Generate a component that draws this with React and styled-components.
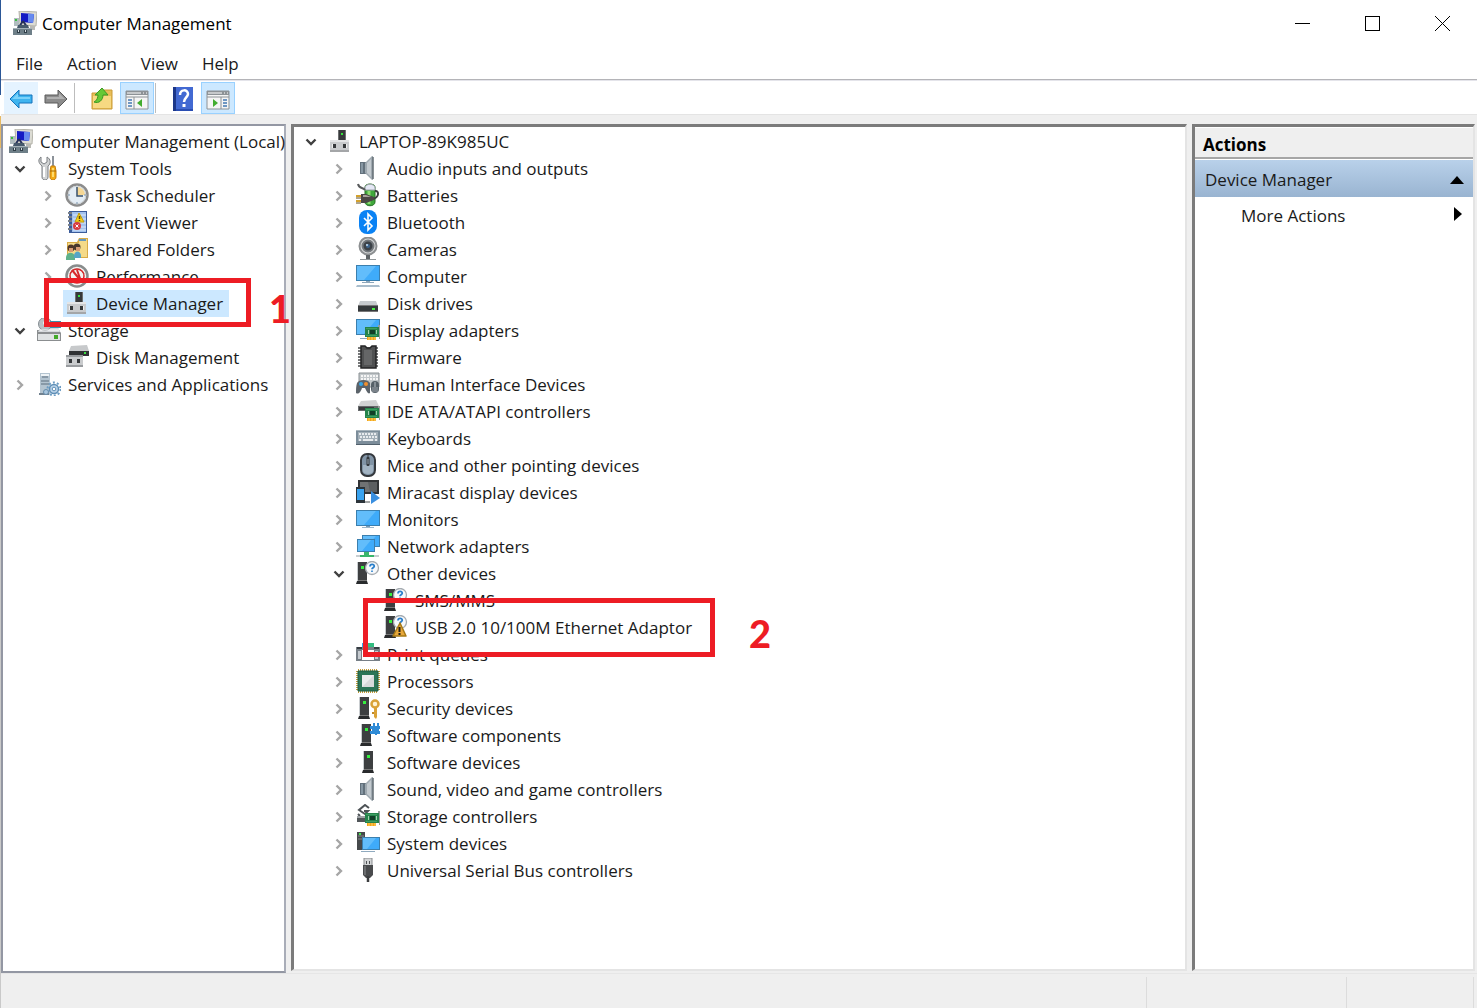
import React, { useState } from "react";
import styled, { createGlobalStyle } from "styled-components";

const GlobalStyle = createGlobalStyle`
  * {
    box-sizing: border-box;
  }
  body {
    margin: 0;
    background: #fff;
    color: #1a1a1a;
    font-family: "Open Sans", "Noto Sans", sans-serif;
    font-size: 17px;
    line-height: 27px;
  }
  button {
    font: inherit;
    color: inherit;
    background: none;
    border: 0;
    padding: 0;
  }
`;

const Window = styled.div`
  min-height: 100vh;
  display: flex;
  flex-direction: column;
  padding-left: 1px;
  background: linear-gradient(
      #2b5797 95px,
      #fff 95px 116px,
      #e6b965 116px 148px,
      #c9c9c9 148px
    )
    left / 1px 100% no-repeat #efefef;
`;

const TitleBar = styled.header`
  display: flex;
  align-items: center;
  height: 46px;
  padding-left: 12px;
  gap: 5px;
  background: #fff;
  color: #000;
`;

const Title = styled.h1`
  flex: 1;
  margin: 0;
  font-size: 17px;
  font-weight: 400;
`;

const WindowControls = styled.div`
  display: flex;
`;

const WindowButton = styled.button`
  display: flex;
  align-items: center;
  justify-content: center;
  width: 70px;
  height: 44px;
`;

const MenuBar = styled.nav`
  display: flex;
  align-items: center;
  height: 34px;
  padding: 2px 0 0 3px;
  background: #fff;
  border-bottom: 1px solid #b4b4b8;
`;

const MenuButton = styled.button`
  padding: 0 12px;
  height: 30px;
`;

const Toolbar = styled.div`
  display: flex;
  align-items: center;
  height: 35px;
  gap: 1px;
  padding: 1px 3px 0;
  background: #fff;
  border-top: 1px solid #e4e4ea;
  border-bottom: 1px solid #e4e4e4;
`;

const ToolButton = styled.button`
  display: flex;
  align-items: center;
  justify-content: center;
  width: 34px;
  height: 32px;
  padding-top: 2px;
  background: ${(props) => (props.$on ? "#cce8ff" : props.$hover ? "#e5f3ff" : "none")};
  border: 1px solid ${(props) => (props.$on ? "#99d1ff" : "transparent")};
`;

const Separator = styled.span`
  width: 10px;
  height: 30px;
  border-left: 1px solid #bdbdbd;
`;

const Body = styled.main`
  flex: 1;
  display: grid;
  grid-template-columns: 285px minmax(0, 1fr) 283px;
  gap: 5px;
  padding: 9px 2px 0 0;
`;

const ScopePane = styled.section`
  padding: 2px 0;
  background: #fff;
  border: 2px solid #9397a3;
  border-right-color: #a9adb8;
`;

const SunkenPane = styled.section`
  margin-bottom: 2px;
  background: #fff;
  border: 3px solid;
  border-width: 3px 2px 2px 3px;
  border-color: #7b7b7b #e4e4e4 #e4e4e4 #7b7b7b;
`;

const Tree = styled.ul`
  margin: 0;
  padding: ${(props) => props.$top || 0}px 0 0;
  list-style: none;
`;

const Row = styled.li`
  position: relative;
  display: flex;
  height: 27px;
  padding-left: ${(props) => props.$indent}px;
`;

const Toggle = styled.button`
  display: flex;
  align-items: center;
  justify-content: center;
  width: 20px;
  margin-right: 5px;
`;

const ToggleSpace = styled.span`
  width: 20px;
  margin-right: 5px;
`;

const Item = styled.button`
  display: flex;
  align-items: center;
  gap: 7px;
  padding: 0 6px 0 2px;
  white-space: nowrap;
  background: ${(props) => (props.$selected ? "#cce8ff" : "none")};

  svg {
    margin-bottom: 2px;
  }
`;

const Callout = styled.span`
  position: absolute;
  z-index: 2;
  top: ${(props) => props.$top}px;
  left: ${(props) => props.$left}px;
  width: ${(props) => props.$width}px;
  height: ${(props) => props.$height}px;
  border: 5px solid #ed1c24;
  pointer-events: none;
`;

const CalloutNumber = styled.b`
  position: absolute;
  top: 50%;
  left: 100%;
  padding-left: ${(props) => props.$gap}px;
  transform: translateY(-50%);
  margin-top: 5px;
  color: #ed1c24;
  font: 900 38px/48px Lato, sans-serif;
`;

const ActionsTitle = styled.h2`
  margin: 0;
  padding: 3px 8px 0;
  height: 32px;
  font-size: 17px;
  font-weight: 700;
  color: #000;
  background: #efefef;
  border-top: 1px solid #fff;
  border-bottom: 2px solid #a6a6a6;
`;

const ActionsGroup = styled.button`
  display: flex;
  align-items: center;
  justify-content: space-between;
  width: 100%;
  height: 37px;
  margin-top: 1px;
  padding: 2px 9px 0 10px;
  background: linear-gradient(#b9d1ea, #99b4d1);
`;

const ActionItem = styled.button`
  display: flex;
  align-items: center;
  justify-content: space-between;
  width: 100%;
  height: 37px;
  padding: 0 11px 0 46px;

  svg {
    margin-bottom: 4px;
  }
`;

const StatusBar = styled.footer`
  display: flex;
  justify-content: flex-end;
  height: 35px;
  padding: 3px 3px 0 0;
  border-top: 1px solid #e6e6e6;
`;

const StatusCell = styled.div`
  width: ${(props) => props.$width}px;
  border-left: 1px solid #dcdcdc;
  &:last-child {
    border-right: 1px solid #dcdcdc;
  }
`;

const Svg = ({ size = 24, children }) => (
  <svg width={size} height={size} viewBox="0 0 24 24" fill="none" aria-hidden="true">
    {children}
  </svg>
);

const Chevron = ({ open }) => (
  <svg width="12" height="12" viewBox="0 0 12 12" fill="none" aria-hidden="true">
    {open ? (
      <path d="M1.500 3.500 6 8l4.500-4.500" stroke="#404040" strokeWidth="2.400" />
    ) : (
      <path d="m3.500 1.500 4.500 4.500-4.500 4.500" stroke="#a6a6a6" strokeWidth="2.400" />
    )}
  </svg>
);

// Shared parts

const Tower = ({ x = 0 }) => (
  <g transform={`translate(${x} 0)`}>
    <path d="M1 1h10v20H1z" fill="#c9cdd0" />
    <path d="M2 1h9v19H2z" fill="#3d3f41" />
    <path d="M1 20h10l1 3H0z" fill="#292b2d" />
    <path d="M2 19h9v1H2z" fill="#777" />
    <path d="M5 5h3v3H5z" fill="#35f03f" />
  </g>
);

const Question = () => (
  <g>
    <circle cx="16" cy="7" r="6.500" fill="#f7f9fb" stroke="#a4aab0" strokeWidth="1.300" />
    <path d="M14 5.500c0-3 4.500-2.800 4.200-.2-.2 1.500-2.200 1.400-2.200 3" stroke="#2a7fcb" strokeWidth="1.800" />
    <path d="M15.200 9.500h1.600v1.600h-1.600z" fill="#2a7fcb" />
  </g>
);

const Card = () => (
  <g>
    <path d="M9 9h14v10H9z" fill="#24834b" />
    <path d="M22 7h2v14h-1V9h-1z" fill="#9a9e9b" />
    <path d="M10 10h11v1H10zM10 17h11v1H10z" fill="#3f9d62" />
    <path d="M14 12h5v4h-5z" fill="#123e28" />
    <path d="M12 12h1v4h-1zM20 12h1v4h-1z" fill="#9fd0ad" />
    <path d="M11 19h9v3h-9z" fill="#f3a519" />
    <path d="M13 19v3m3-3v3m3-3v3" stroke="#ffd36a" />
  </g>
);

const Screen = ({ x = 0, y = 0, w = 24, h = 16 }) => (
  <g>
    <path d={`M${x} ${y}h${w}v${h}h-${w}z`} fill="#3b7fae" />
    <path d={`M${x + 1} ${y + 1}h${w - 2}v${h - 2}h-${w - 2}z`} fill="#3fabfa" />
    <path d={`M${x + 1} ${y + 1}h${w - 5}l-${Math.round(w / 2)} ${h - 2}h-${w - 5 - Math.round(w / 2)}z`} fill="#62bdfb" />
  </g>
);

const UsbBox = () => (
  <g>
    <path d="M10 1h8v11h-8z" fill="#37393b" />
    <path d="M10 1h1v11h-1zM17 1h1v11h-1z" fill="#6d6f70" />
    <path d="M13 4h2v2h-2z" fill="#35e53b" />
    <path d="M2 11h19v12H2z" fill="#c9cbcd" />
    <path d="M2 11h19v2H2z" fill="#e4e5e6" />
    <path d="M2 21h19v2H2z" fill="#a4a6a8" />
    <path d="M5 15h3v4H5zM15 15h3v4h-3z" fill="#35383a" />
    <path d="M4 15h1v4H4zM18 15h1v4h-1z" fill="#eee" />
  </g>
);

const icons = {
  management: (
    <>
      <path d="m6 0 18 1-1 14-16-1z" fill="#dcdcd4" stroke="#b3b2a8" />
      <path d="m8 2 13 1-1 9-12-1z" fill="#141bc4" />
      <path d="m15 3 6 0-1 9-5-1z" fill="#668aef" />
      <path d="M1 7h5v8H1z" fill="#b1bdc0" />
      <path d="M2 8h2v2H2z" fill="#3bbe3f" />
      <path d="M10 10 6 16M10 10l4 6" stroke="#25305a" strokeWidth="2" />
      <path d="M17 15h5v4h-5z" fill="#b9b9b4" />
      <path d="M5 14h10l1 3H4z" fill="#46596b" />
      <path d="M0 17h19v7H0z" fill="#6e7f88" />
      <path d="M0 17h19v1H0z" fill="#a4b1b8" />
      <path d="M4 19h3v3H4zM11 19h3v3h-3z" fill="#303f49" />
      <path d="M5 19h1v2H5zM12 19h1v2h-1z" fill="#d4dce0" />
    </>
  ),
  tools: (
    <>
      <path d="M4 1v5l3 2 3-2V1c4 2 4 7 1 9v11c0 4-6 4-6 0V10C1 7 1 3 4 1Z" fill="#d2d4d5" stroke="#7b7f83" />
      <path d="M7 11v10" stroke="#fff" strokeWidth="2" />
      <path d="M16 0v11" stroke="#8c9299" strokeWidth="2" />
      <path d="M14 10h4l1 5v6c0 4-6 4-6 0v-6z" fill="#f3aa16" stroke="#c47d0b" />
      <path d="M16 12v9" stroke="#ffdb6b" strokeWidth="2" />
      <path d="M13 15h6" stroke="#a86805" />
    </>
  ),
  clock: (
    <>
      <circle cx="12" cy="12" r="10.500" fill="#e4edf5" stroke="#8c8c8c" strokeWidth="2.500" />
      <circle cx="12" cy="12" r="8.800" stroke="#cfd3d6" />
      <path d="M12 12V4a8 8 0 0 1 8 8z" fill="#f5d795" />
      <path d="M12 4v9h6" stroke="#39526c" strokeWidth="1.500" />
      <path d="M12 19v2M3 12h2M19 12h2" stroke="#7893ad" />
    </>
  ),
  event: (
    <>
      <path d="M4 1h18v22H4z" fill="#3b5c9b" />
      <path d="M7 2h14v20H7z" fill="#a3c2ee" />
      <path d="M8 5h13M8 9h13M8 13h13M8 17h13M8 20h13" stroke="#dbe8fa" />
      <path d="M3 3h4M3 7h4M3 11h4M3 15h4M3 19h4" stroke="#777e88" strokeWidth="2" />
      <path d="m14 3 5 9h-9z" fill="#f7cf19" stroke="#c19d0b" />
      <path d="M14.500 6v3M14.500 10v1" stroke="#59480b" strokeWidth="1.500" />
      <circle cx="12" cy="16" r="4" fill="#d83c40" />
      <path d="m10.500 14.500 3 3m0-3-3 3" stroke="#fff" />
    </>
  ),
  shared: (
    <>
      <path d="M2 5h10l2-4h9v20H2z" fill="#d9ab45" />
      <path d="M3 6h19v14H3zM14 2h8v4h-8z" fill="#f5da88" />
      <path d="M14 3h7" stroke="#6799bb" strokeWidth="2" />
      <circle cx="6" cy="11" r="3.500" fill="#50372a" />
      <circle cx="12" cy="10" r="3.500" fill="#4a392e" />
      <path d="M4 11h4v4H4zM11 10h4v4h-4z" fill="#d89b72" />
      <path d="M1 21c0-7 9-7 9 0v2H1z" fill="#5eb18b" />
      <path d="M9 19c0-6 7-6 7 0v2H9z" fill="#56a5c6" />
    </>
  ),
  performance: (
    <>
      <circle cx="12" cy="12" r="10.500" fill="#f4f4f2" stroke="#888c8c" strokeWidth="2.500" />
      <path d="M5 10c1-6 12-7 14 0" stroke="#79a98d" />
      <circle cx="12" cy="12" r="7" stroke="#d7292c" strokeWidth="1.500" />
      <path d="m7 6 9 11M12 6l4 11" stroke="#d7292c" strokeWidth="2" />
    </>
  ),
  device: <UsbBox />,
  storage: (
    <>
      <path d="M0 12h22l2 3v8H0z" fill="#8b8e90" />
      <path d="m3 10 18-1 2 5H1z" fill="#d6d9dc" />
      <circle cx="8" cy="6" r="6.500" fill="#b9c0c4" stroke="#858d92" />
      <circle cx="8" cy="5" r="2" fill="#f1f3f4" />
      <path d="M13 3h11v7H13z" fill="#3b91ae" />
      <path d="M1 16h22v6H1z" fill="#dfe2e3" />
      <path d="M17 17h4v4h-4z" fill="#42a928" />
      <path d="M3 12h19" stroke="#fff" />
    </>
  ),
  diskManagement: (
    <>
      <path d="m6 1 16-1 2 6H4z" fill="#c7c9cb" />
      <path d="M4 6h20v5H4z" fill="#303234" />
      <path d="M19 7h2v2h-2z" fill="#3ce044" />
      <path d="M1 10h17v12H1z" fill="#c9cbcd" />
      <path d="M1 10h17v2H1zM1 20h17v2H1z" fill="#989b9e" />
      <path d="M4 14h3v4H4zM12 14h3v4h-3z" fill="#333638" />
    </>
  ),
  services: (
    <>
      <path d="M3 1h10v21H3z" fill="#b4c4d0" />
      <path d="M4 2h8v2H4z" fill="#eef3f6" />
      <path d="M5 5h6M4 9h8M4 12h8" stroke="#5c6f7f" />
      <path d="M2 21h10v2H2z" fill="#71818f" />
      <circle cx="17" cy="17" r="6.500" stroke="#6c9cc3" strokeWidth="2" strokeDasharray="2 2.100" />
      <circle cx="17" cy="17" r="4.500" fill="#bcd4e9" stroke="#5f8fb7" strokeWidth="1.500" />
      <circle cx="17" cy="17" r="1.800" fill="#fff" stroke="#5f8fb7" />
      <circle cx="9" cy="20" r="2.500" fill="#a8c6df" stroke="#668caa" />
    </>
  ),
  audio: (
    <>
      <path d="M4 6h6v12H4z" fill="#63717c" />
      <path d="M5 7h2v10H5z" fill="#8797a3" />
      <path d="m9 7 7-7h1v24h-1l-7-7z" fill="#9fa9b0" />
      <path d="m11 7 4-4v18l-4-4z" fill="#c3cacf" />
      <path d="M17 1v22" stroke="#626c73" strokeWidth="1.500" />
    </>
  ),
  battery: (
    <>
      <path d="M9 4c0-4 10-4 10 0v15c0 5-10 5-10 0z" fill="#40a83c" stroke="#267125" />
      <path d="M9 5c0-5 10-5 10 0v2H9z" fill="#e5e8f5" stroke="#9fa4ad" />
      <path d="M13 8v13" stroke="#8cda70" strokeWidth="3" />
      <path d="M2 1c1 5 5 3 7 6" stroke="#57595b" strokeWidth="2" />
      <path d="M16 16c8-1 7-9 3-8" stroke="#3a3c3e" strokeWidth="2" />
      <path d="M5 11h5l8 3v3l-8 3H5z" fill="#4b4846" />
      <path d="M7 12h3l5 2H7z" fill="#aaa49e" />
      <path d="M0 13h5M0 18h5" stroke="#d3a12d" strokeWidth="2" />
      <path d="M0 15h5M0 20h5" stroke="#5b4a20" />
    </>
  ),
  bluetooth: (
    <>
      <rect x="3" y="0" width="18" height="24" rx="8" fill="#0a82f4" />
      <path d="m8 8 8 8-4 4V4l4 4-8 8" stroke="#fff" strokeWidth="1.600" />
    </>
  ),
  camera: (
    <>
      <circle cx="12" cy="9" r="8.500" fill="#d6d8d9" stroke="#8c8f91" strokeWidth="2" />
      <circle cx="12" cy="9" r="5.500" fill="#3c4248" stroke="#74797d" strokeWidth="2" />
      <circle cx="12" cy="9" r="2" fill="#3e668f" />
      <path d="M10 7h2v2h-2z" fill="#a5c0d6" />
      <path d="M10 18h4v4h-4z" fill="#5e6366" />
      <path d="M4 22h16v1H4z" fill="#919698" />
    </>
  ),
  computer: (
    <>
      <Screen y={1} />
      <path d="M10 17h4v1h-4zM6 18h12v1H6z" fill="#8ea7bb" />
      <path d="M1 21h22l1 2H0z" fill="#a9bdcc" />
    </>
  ),
  disk: (
    <>
      <path d="m4 10 16 0 2 5H2z" fill="#c7cbce" />
      <path d="M2 14h20v7H2z" fill="#35393b" />
      <path d="M2 14h20v1H2zM2 20h20v1H2z" fill="#777" />
      <path d="M16 17h3v2h-3z" fill="#48ef44" />
    </>
  ),
  display: (
    <>
      <Screen y={1} />
      <path d="M4 20h9v1H4z" fill="#8ca6bc" />
      <Card />
    </>
  ),
  firmware: (
    <>
      <path d="M2 3h20M2 6h20M2 9h20M2 12h20M2 15h20M2 18h20M2 21h20" stroke="#4a4c4e" strokeWidth="1.500" />
      <path d="M5 1h4l2 2h3l2-2h4v22H5z" fill="#505152" stroke="#242526" strokeWidth="1.500" />
      <path d="M8 5h8v15H8z" fill="#656667" />
    </>
  ),
  hid: (
    <>
      <path d="M3 1h20v14H3z" fill="#c3c8cb" stroke="#8a9094" />
      <path d="M5 4h17M5 7h17" stroke="#f5f5f5" strokeWidth="2" strokeDasharray="2 1" />
      <path d="M1 11c2-4 11-4 13 0v10c-2 2-4-3-5-5H6c-1 3-3 7-6 5 0-3 0-7 1-10z" fill="#5b636a" />
      <circle cx="5" cy="12" r="2" fill="#32a7eb" />
      <circle cx="10" cy="12" r="2" fill="#ef8f2e" />
      <rect x="15" y="9" width="8" height="12" rx="4" fill="#566068" />
      <path d="M16 15h6v5h-6z" fill="#7a828a" />
      <path d="M19 10v5" stroke="#b6bec4" />
    </>
  ),
  ide: (
    <>
      <path d="m5 2 15-1 3 6H2z" fill="#d1d2d3" />
      <path d="M2 7h21v5H2z" fill="#66696b" />
      <path d="M3 8h15v3H3z" fill="#37393b" />
      <Card />
    </>
  ),
  keyboard: (
    <>
      <path d="M0 4h24v15H0z" fill="#7c8d9a" />
      <path d="M0 4h24v1H0z" fill="#a8b4bc" />
      <path d="M2 6h20v9H2z" fill="#a3afb8" />
      <path d="M3 8h18M4 11h17" stroke="#fff" strokeWidth="1.500" strokeDasharray="2 1" />
      <path d="M3 14h2m2 0h10m2 0h2" stroke="#fff" strokeWidth="1.500" />
      <path d="M0 18h24v1H0z" fill="#52616d" />
    </>
  ),
  mouse: (
    <>
      <rect x="5" y="1" width="14" height="22" rx="6" fill="#8194a6" stroke="#34383d" strokeWidth="2" />
      <path d="M7 12h10v6c0 4-10 4-10 0z" fill="#a3b4c3" />
      <path d="M12 2v5" stroke="#34383d" />
      <rect x="10.500" y="4" width="3" height="9" rx="1" fill="#34383d" />
      <path d="M12 6v5" stroke="#9aa9b7" />
    </>
  ),
  miracast: (
    <>
      <path d="M2 0h21v14H2z" fill="#323436" />
      <path d="M4 2h17v10H4z" fill="#707273" />
      <path d="m12 2 9 0v10h-7z" fill="#5c5f61" />
      <path d="M0 7h9v16H0z" fill="#2c343a" />
      <path d="M1 9h7v11H1z" fill="#38a2ef" />
      <path d="M9 22h5" stroke="#a3a5a6" strokeWidth="2" />
      <path d="m15 11 9 7-9 6z" fill="#3a8fe0" />
    </>
  ),
  monitor: (
    <>
      <Screen y={3} />
      <path d="M10 19h4v1h-4z" fill="#769ab7" />
      <path d="M6 20h12v1H6z" fill="#9db7ca" />
    </>
  ),
  network: (
    <>
      <Screen x={6} y={1} w={18} h={12} />
      <Screen x={1} y={5} w={18} h={13} />
      <path d="M8 18h5v3h5v2H4v-2h4z" fill="#39b66b" />
      <path d="M0 21h4v2H0zM18 21h5v2h-5z" fill="#c8ced1" />
    </>
  ),
  other: (
    <>
      <Tower />
      <Question />
    </>
  ),
  warning: (
    <>
      <Tower />
      <Question />
      <path d="m16 8 6 13H9z" fill="#e8a83a" stroke="#a67916" strokeWidth="1.500" strokeLinejoin="round" />
      <path d="M15.500 12v5M15.500 18v2" stroke="#211d14" strokeWidth="2" />
    </>
  ),
  printer: (
    <>
      <path d="M6 1h12v6H6z" fill="#31a6ed" />
      <path d="M12 1h6v6h-6z" fill="#32bc80" />
      <path d="M0 5h24v14H0z" fill="#777f86" />
      <path d="M1 5h5v2H1zM18 5h5v2h-5z" fill="#353b40" />
      <path d="M6 8h12v10H6z" fill="#fff" />
      <path d="M2 9h3v8H2zM19 9h3v8h-3z" fill="#c6cbd0" />
    </>
  ),
  processor: (
    <>
      <path d="M2 1h20M2 23h20M1 2v20M23 2v20" stroke="#c49b37" strokeWidth="2" strokeDasharray="1 1" />
      <path d="M2 2h20v20H2z" fill="#2c7557" stroke="#1f5d43" />
      <path d="M6 6h12v12H6z" fill="#d7d9da" />
      <path d="m6 6h12L6 18z" fill="#ebeced" />
    </>
  ),
  security: (
    <>
      <Tower x={2} />
      <circle cx="19" cy="8" r="3.500" fill="#fff3d5" stroke="#daa237" strokeWidth="2.500" />
      <path d="M18 11h3v10l-1 2-2-2z" fill="#daa237" />
      <path d="M16 16h2v2h-2z" fill="#c18825" />
    </>
  ),
  components: (
    <>
      <Tower x={4} />
      <path d="M14 3h3V0h2v3h2V0h2v3h1v3h-1v2h1v3h-3v1h-2v-1h-5V8h2V6h-2z" fill="#2f8bd6" />
    </>
  ),
  software: <Tower x={6} />,
  storageController: (
    <>
      <path d="M13 4 9 1 3 6l6 4 3-3H8M2 10l2 2" stroke="#4d5256" strokeWidth="2" />
      <path d="M1 12h10v2H1z" fill="#9ea2a5" />
      <path d="M1 14h10v4H1z" fill="#515659" />
      <Card />
    </>
  ),
  system: (
    <>
      <path d="M1 1h8v18H1z" fill="#46494b" />
      <path d="M2 5h6M2 8h6" stroke="#85898c" />
      <path d="M3 2h2v2H3z" fill="#44e74c" />
      <Screen x={6} y={6} w={18} h={13} />
      <path d="M5 20h14v1H5z" fill="#8faabf" />
    </>
  ),
  usb: (
    <>
      <path d="M8 0h8v8H8z" fill="#d2d4d5" stroke="#898c8f" />
      <path d="M10 3h1v3h-1zM13 3h1v3h-1z" fill="#505356" />
      <path d="M7 7h10v10l-3 3h-4l-3-3z" fill="#494b4d" />
      <path d="M8 8h2v9H8z" fill="#6b6d6f" />
      <path d="M12 18v6" stroke="#3b3d3f" strokeWidth="2.500" />
    </>
  ),
  back: (
    <>
      <path d="m1 12 9-9v5h13v8H10v5z" fill="#3fb4ef" stroke="#1473bc" strokeLinejoin="round" />
      <path d="m3 12 6-6v4h12v2z" fill="#7bd2fa" />
    </>
  ),
  forward: (
    <>
      <path d="m23 12-9-9v5H1v8h13v5z" fill="#8c8c8c" stroke="#5a5a5a" strokeLinejoin="round" />
      <path d="m21 12-6-6v4H3v2z" fill="#b1b1b1" />
    </>
  ),
  up: (
    <>
      <path d="M2 6h10l2-3h8v19H2z" fill="#e8bd57" stroke="#c99a36" />
      <path d="M3 9h18v12H3z" fill="#f7d982" />
      <path d="M4 15c3-1 4-5 4-7H5l7-7 6 7h-5c0 5-4 9-9 7z" fill="#66c835" stroke="#3b9a24" />
    </>
  ),
  treeToggle: (
    <>
      <path d="M1 4h22v18H1z" fill="#f5f5f5" stroke="#8d9296" />
      <path d="M1 4h22v4H1z" fill="#8d9296" />
      <path d="M2 6h14M18 6h1M21 6h1" stroke="#fff" />
      <path d="M1 10h22M9 10v12" stroke="#8d9296" />
      <path d="M3 13h4M3 16h4M3 19h4" stroke="#4378b3" strokeWidth="1.500" />
      <path d="m12 16 5-4v8z" fill="#42ad2f" />
    </>
  ),
  help: (
    <>
      <path d="M2 0h20v24H2z" fill="#294db2" />
      <path d="M5 0h17v22H5z" fill="#4269d2" />
      <path d="M2 0h3v24H2z" fill="#1c3789" />
      <path d="M9 8c0-6 8-6 8-1 0 3-4 4-4 8" stroke="#fff" strokeWidth="2.500" />
      <path d="M11.500 17h3v3h-3z" fill="#fff" />
    </>
  ),
  actionToggle: (
    <>
      <path d="M1 4h22v18H1z" fill="#f5f5f5" stroke="#8d9296" />
      <path d="M1 4h22v4H1z" fill="#8d9296" />
      <path d="M2 6h14M18 6h1M21 6h1" stroke="#fff" />
      <path d="M1 10h22M15 10v12" stroke="#8d9296" />
      <path d="M17 13h4M17 16h4M17 19h4" stroke="#4378b3" strokeWidth="1.500" />
      <path d="m12 16-5-4v8z" fill="#42ad2f" />
    </>
  ),
};

const Icon = ({ name }) => <Svg>{icons[name]}</Svg>;

const scopeNodes = [
  { label: "System Tools", icon: "tools", level: 0, open: true },
  { label: "Task Scheduler", icon: "clock", level: 1, open: false },
  { label: "Event Viewer", icon: "event", level: 1, open: false },
  { label: "Shared Folders", icon: "shared", level: 1, open: false },
  { label: "Performance", icon: "performance", level: 1, open: false },
  {
    label: "Device Manager",
    icon: "device",
    level: 1,
    callout: { number: 1, gap: 23, top: -12, left: 41, width: 207, height: 49 },
  },
  { label: "Storage", icon: "storage", level: 0, open: true },
  { label: "Disk Management", icon: "diskManagement", level: 1 },
  { label: "Services and Applications", icon: "services", level: 0, open: false },
];

const deviceNodes = [
  { label: "LAPTOP-89K985UC", icon: "device", level: 0, open: true },
  { label: "Audio inputs and outputs", icon: "audio", level: 1, open: false },
  { label: "Batteries", icon: "battery", level: 1, open: false },
  { label: "Bluetooth", icon: "bluetooth", level: 1, open: false },
  { label: "Cameras", icon: "camera", level: 1, open: false },
  { label: "Computer", icon: "computer", level: 1, open: false },
  { label: "Disk drives", icon: "disk", level: 1, open: false },
  { label: "Display adapters", icon: "display", level: 1, open: false },
  { label: "Firmware", icon: "firmware", level: 1, open: false },
  { label: "Human Interface Devices", icon: "hid", level: 1, open: false },
  { label: "IDE ATA/ATAPI controllers", icon: "ide", level: 1, open: false },
  { label: "Keyboards", icon: "keyboard", level: 1, open: false },
  { label: "Mice and other pointing devices", icon: "mouse", level: 1, open: false },
  { label: "Miracast display devices", icon: "miracast", level: 1, open: false },
  { label: "Monitors", icon: "monitor", level: 1, open: false },
  { label: "Network adapters", icon: "network", level: 1, open: false },
  { label: "Other devices", icon: "other", level: 1, open: true },
  { label: "SMS/MMS", icon: "other", level: 2 },
  {
    label: "USB 2.0 10/100M Ethernet Adaptor",
    icon: "warning",
    level: 2,
    callout: { number: 2, gap: 39, top: -16, left: 69, width: 352, height: 59 },
  },
  { label: "Print queues", icon: "printer", level: 1, open: false },
  { label: "Processors", icon: "processor", level: 1, open: false },
  { label: "Security devices", icon: "security", level: 1, open: false },
  { label: "Software components", icon: "components", level: 1, open: false },
  { label: "Software devices", icon: "software", level: 1, open: false },
  { label: "Sound, video and game controllers", icon: "audio", level: 1, open: false },
  { label: "Storage controllers", icon: "storageController", level: 1, open: false },
  { label: "System devices", icon: "system", level: 1, open: false },
  { label: "Universal Serial Bus controllers", icon: "usb", level: 1, open: false },
];

const TreeNode = ({ node, selected, onSelect }) => (
  <Row $indent={7 + node.level * 28}>
    {node.open === undefined ? (
      <ToggleSpace />
    ) : (
      <Toggle aria-label={`Toggle ${node.label}`} aria-expanded={node.open}>
        <Chevron open={node.open} />
      </Toggle>
    )}
    <Item $selected={selected} onClick={onSelect}>
      <Icon name={node.icon} />
      {node.label}
    </Item>
    {node.callout ? (
      <Callout
        $top={node.callout.top}
        $left={node.callout.left}
        $width={node.callout.width}
        $height={node.callout.height}
      >
        <CalloutNumber $gap={node.callout.gap}>{node.callout.number}</CalloutNumber>
      </Callout>
    ) : null}
  </Row>
);

const App = () => {
  const [selected, setSelected] = useState("Device Manager");

  return (
    <>
      <GlobalStyle />
      <Window>
        <TitleBar>
          <Icon name="management" />
          <Title>Computer Management</Title>
          <WindowControls>
            <WindowButton aria-label="Minimize">
              <svg width="15" height="15" stroke="#000" shapeRendering="crispEdges">
                <path d="M0 7.500h15" />
              </svg>
            </WindowButton>
            <WindowButton aria-label="Maximize">
              <svg width="15" height="15" stroke="#000" fill="none" shapeRendering="crispEdges">
                <path d="M.5.5h14v14H.5z" />
              </svg>
            </WindowButton>
            <WindowButton aria-label="Close">
              <svg width="15" height="15" stroke="#000">
                <path d="m0 0 15 15M15 0 0 15" />
              </svg>
            </WindowButton>
          </WindowControls>
        </TitleBar>
        <MenuBar>
          {["File", "Action", "View", "Help"].map((name) => (
            <MenuButton key={name}>{name}</MenuButton>
          ))}
        </MenuBar>
        <Toolbar>
          <ToolButton $hover aria-label="Back">
            <Icon name="back" />
          </ToolButton>
          <ToolButton aria-label="Forward">
            <Icon name="forward" />
          </ToolButton>
          <Separator />
          <ToolButton aria-label="Up one level">
            <Icon name="up" />
          </ToolButton>
          <ToolButton $on aria-label="Show or hide console tree">
            <Icon name="treeToggle" />
          </ToolButton>
          <Separator />
          <ToolButton aria-label="Help topics">
            <Icon name="help" />
          </ToolButton>
          <ToolButton $on aria-label="Show or hide action pane">
            <Icon name="actionToggle" />
          </ToolButton>
        </Toolbar>
        <Body>
          <ScopePane>
            <Tree>
              <Row $indent={4}>
                <Item>
                  <Icon name="management" />
                  Computer Management (Local)
                </Item>
              </Row>
              {scopeNodes.map((node) => (
                <TreeNode
                  key={node.label}
                  node={node}
                  selected={node.label === selected}
                  onSelect={() => setSelected(node.label)}
                />
              ))}
            </Tree>
          </ScopePane>
          <SunkenPane>
            <Tree $top={1}>
              {deviceNodes.map((node) => (
                <TreeNode key={node.label} node={node} />
              ))}
            </Tree>
          </SunkenPane>
          <SunkenPane>
            <ActionsTitle>Actions</ActionsTitle>
            <ActionsGroup>
              Device Manager
              <svg width="14" height="8" aria-hidden="true">
                <path d="m7 0 7 8H0z" fill="#000" />
              </svg>
            </ActionsGroup>
            <ActionItem>
              More Actions
              <svg width="8" height="14" aria-hidden="true">
                <path d="m0 0 8 7-8 7z" fill="#000" />
              </svg>
            </ActionItem>
          </SunkenPane>
        </Body>
        <StatusBar>
          <StatusCell $width={200} />
          <StatusCell $width={128} />
        </StatusBar>
      </Window>
    </>
  );
};

export default App;
